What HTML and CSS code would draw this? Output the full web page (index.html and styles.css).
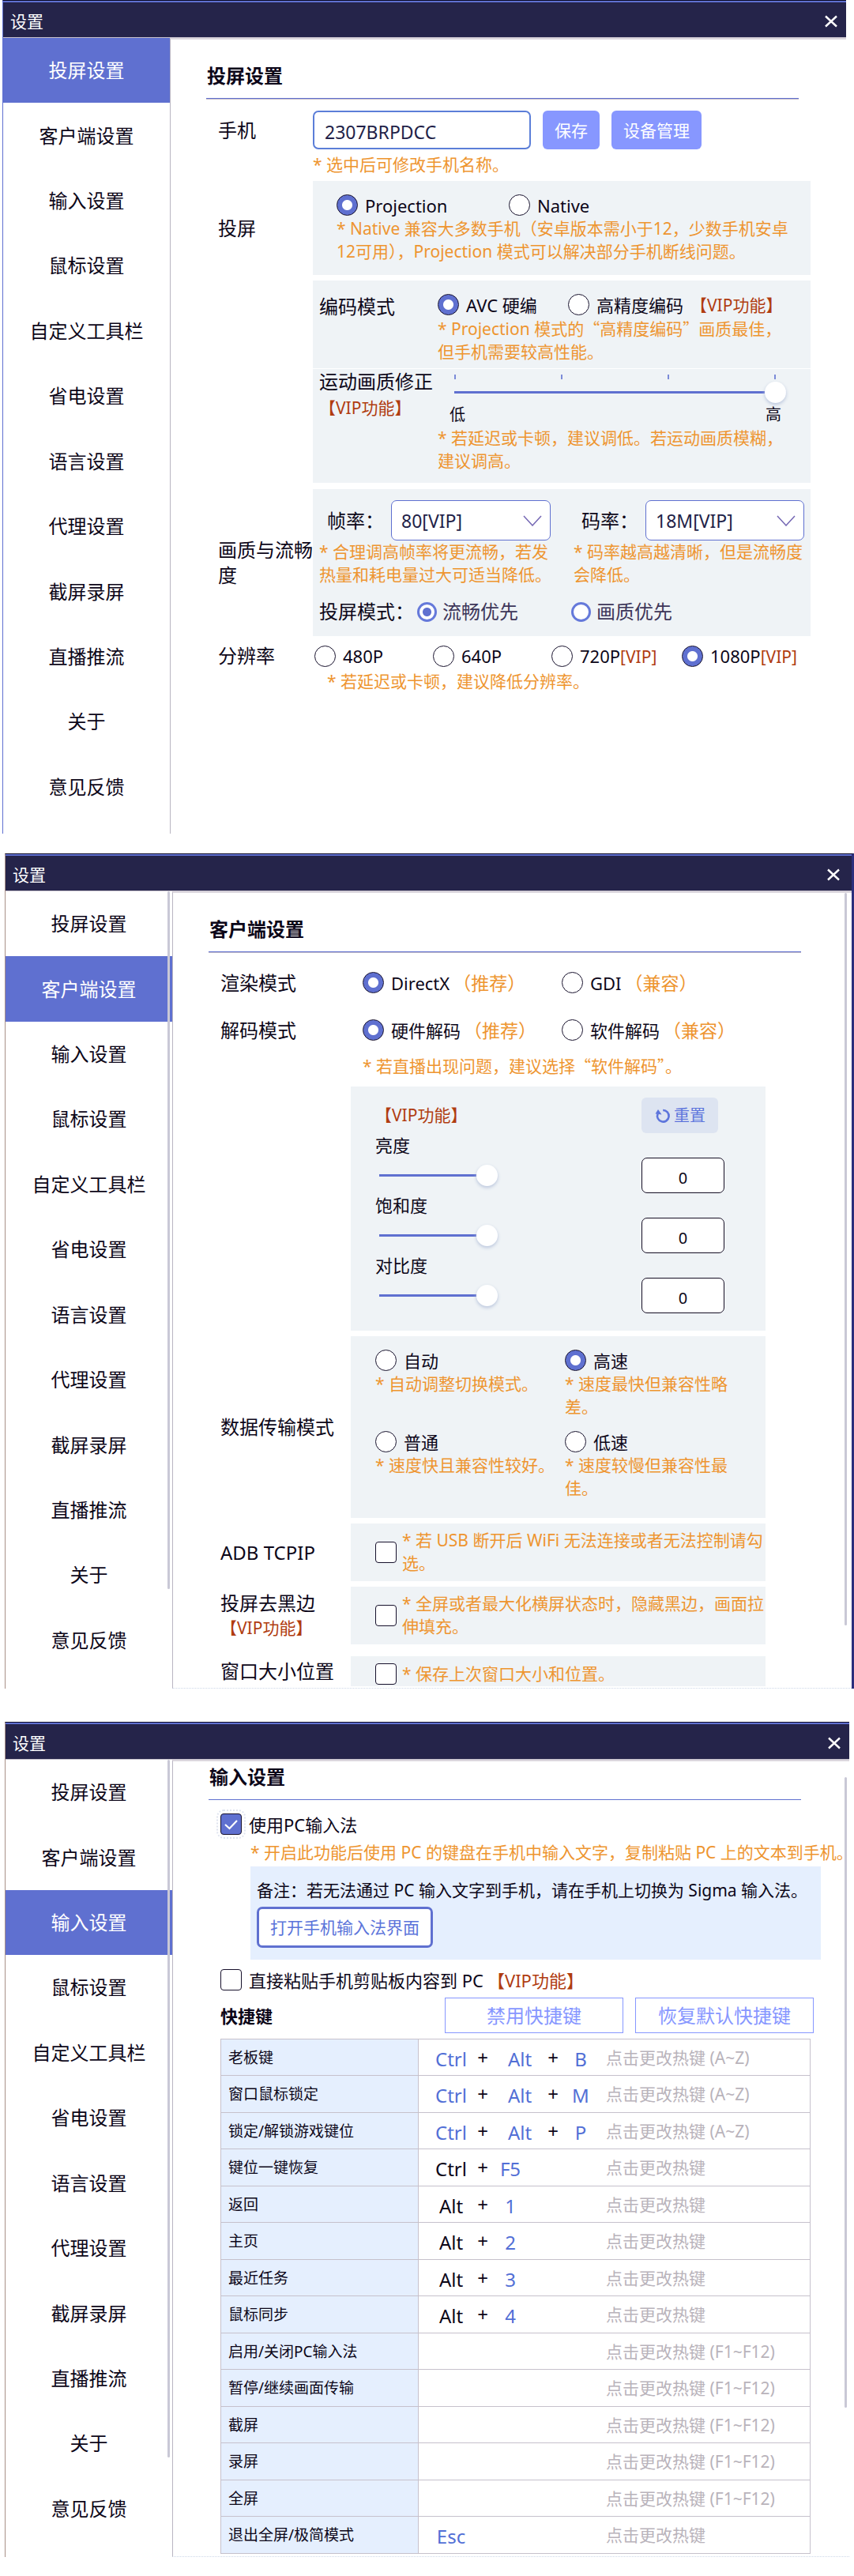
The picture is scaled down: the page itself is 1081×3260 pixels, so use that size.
FILE: index.html
```html
<!DOCTYPE html>
<html lang="zh-CN">
<head>
<meta charset="utf-8">
<title>设置</title>
<link rel="stylesheet" href="styles.css">
</head>
<body>

<section class="window window--mirror">
  <header class="titlebar">
    <span>设置</span>
    <button class="close" aria-label="关闭"><svg viewBox="0 0 16 16" width="16" height="16"><path d="M1 1.500L15 14.500M15 1.500L1 14.500"/></svg></button>
  </header>
  <div class="body">
    <nav class="nav">
      <a class="active" href="#mirror">投屏设置</a><a href="#client">客户端设置</a><a href="#input">输入设置</a><a href="#mouse">鼠标设置</a><a href="#toolbar">自定义工具栏</a><a href="#power">省电设置</a><a href="#lang">语言设置</a><a href="#proxy">代理设置</a><a href="#record">截屏录屏</a><a href="#live">直播推流</a><a href="#about">关于</a><a href="#feedback">意见反馈</a>
    </nav>
    <main class="main" id="mirror">
      <h2>投屏设置</h2>

      <div class="row row--phone">
        <label for="phone">手机</label>
        <div class="controls">
          <input class="text-input" id="phone" type="text" value="2307BRPDCC">
          <button class="btn">保存</button>
          <button class="btn">设备管理</button>
        </div>
        <p class="hint">* 选中后可修改手机名称。</p>
      </div>

      <div class="row row--cast">
        <span>投屏</span>
        <div class="panel panel--cast">
          <div class="options options--cast">
            <label class="option"><input type="radio" name="cast" checked>Projection</label>
            <label class="option"><input type="radio" name="cast">Native</label>
          </div>
          <p class="hint">* Native 兼容大多数手机（安卓版本需小于12，少数手机安卓12可用），Projection 模式可以解决部分手机断线问题。</p>
        </div>
      </div>

      <div class="row row--codec">
        <div class="panel panel--split panel--codec">
          <span class="side">编码模式</span>
          <div>
            <div class="options options--codec">
              <label class="option"><input type="radio" name="codec" checked>AVC 硬编</label>
              <label class="option"><input type="radio" name="codec">高精度编码<span class="vip">【VIP功能】</span></label>
            </div>
            <p class="hint">* Projection 模式的<span class="quote">“</span>高精度编码<span class="quote">”</span>画质最佳，但手机需要较高性能。</p>
          </div>
        </div>
      </div>
      <div class="row row--motion">
        <div class="panel panel--split panel--motion">
          <label class="side" for="motion">运动画质修正<br><span class="vip">【VIP功能】</span></label>
          <div>
            <div class="ticks"><i></i><i></i><i></i><i></i></div>
            <input class="range range--motion" id="motion" type="range" min="0" max="3" value="3">
            <div class="range-ends"><span>低</span><span>高</span></div>
            <p class="hint">* 若延迟或卡顿，建议调低。若运动画质模糊，建议调高。</p>
          </div>
        </div>
      </div>

      <div class="row row--quality">
        <span>画质与流畅度</span>
        <div class="panel panel--quality">
          <div>
            <div class="pick">
              <label for="fps">帧率：</label>
              <div class="select"><select id="fps"><option>80[VIP]</option></select><svg viewBox="0 0 24 14" width="24" height="14"><path d="M1 1L12 13L23 1"/></svg></div>
            </div>
            <p class="hint hint--fps">* 合理调高帧率将更流畅，若发热量和耗电量过大可适当降低。</p>
          </div>
          <div>
            <div class="pick">
              <label for="rate">码率：</label>
              <div class="select"><select id="rate"><option>18M[VIP]</option></select><svg viewBox="0 0 24 14" width="24" height="14"><path d="M1 1L12 13L23 1"/></svg></div>
            </div>
            <p class="hint">* 码率越高越清晰，但是流畅度会降低。</p>
          </div>
          <div class="priority">
            <span>投屏模式：</span>
            <label class="option option--ring"><input type="radio" name="priority" checked>流畅优先</label>
            <label class="option option--ring"><input type="radio" name="priority">画质优先</label>
          </div>
        </div>
      </div>

      <div class="row row--resolution">
        <span>分辨率</span>
        <div class="options options--resolution">
          <label class="option"><input type="radio" name="res">480P</label>
          <label class="option"><input type="radio" name="res">640P</label>
          <label class="option"><input type="radio" name="res"><span>720P<span class="tag">[VIP]</span></span></label>
          <label class="option"><input type="radio" name="res" checked><span>1080P<span class="tag">[VIP]</span></span></label>
        </div>
        <p class="hint">* 若延迟或卡顿，建议降低分辨率。</p>
      </div>
    </main>
  </div>
</section>

<section class="window window--client">
  <header class="titlebar">
    <span>设置</span>
    <button class="close" aria-label="关闭"><svg viewBox="0 0 16 16" width="16" height="16"><path d="M1 1.500L15 14.500M15 1.500L1 14.500"/></svg></button>
  </header>
  <div class="body">
    <nav class="nav">
      <a href="#mirror">投屏设置</a><a class="active" href="#client">客户端设置</a><a href="#input">输入设置</a><a href="#mouse">鼠标设置</a><a href="#toolbar">自定义工具栏</a><a href="#power">省电设置</a><a href="#lang">语言设置</a><a href="#proxy">代理设置</a><a href="#record">截屏录屏</a><a href="#live">直播推流</a><a href="#about">关于</a><a href="#feedback">意见反馈</a>
      <i class="scrollbar"></i>
    </nav>
    <main class="main" id="client">
      <h2>客户端设置</h2>

      <div class="row row--render">
        <span>渲染模式</span>
        <div class="options options--client">
          <label class="option"><input type="radio" name="render" checked><span>DirectX<span class="note">（推荐）</span></span></label>
          <label class="option"><input type="radio" name="render"><span>GDI<span class="note">（兼容）</span></span></label>
        </div>
      </div>
      <div class="row row--decode">
        <span>解码模式</span>
        <div class="options options--client">
          <label class="option"><input type="radio" name="decode" checked><span>硬件解码<span class="note">（推荐）</span></span></label>
          <label class="option"><input type="radio" name="decode"><span>软件解码<span class="note">（兼容）</span></span></label>
        </div>
        <p class="hint">* 若直播出现问题，建议选择<span class="quote">“</span>软件解码<span class="quote">”</span>。</p>
      </div>

      <div class="row row--inset row--picture">
        <div class="panel panel--picture">
          <span class="vip">【VIP功能】</span>
          <button class="reset"><svg viewBox="0 0 20 20" width="20" height="20"><path class="arc" d="M10.200 3A7.300 7.300 0 1 1 3.600 7.500"/><path class="tip" d="M4 2L8.600 8.600L0.600 7.600Z"/></svg>重置</button>
          <label for="bright">亮度</label>
          <input class="range range--picture" id="bright" type="range" min="-100" max="100" value="0">
          <input class="number" type="text" value="0" aria-label="亮度值">
          <label for="satur">饱和度</label>
          <input class="range range--picture" id="satur" type="range" min="-100" max="100" value="0">
          <input class="number" type="text" value="0" aria-label="饱和度值">
          <label for="contrast">对比度</label>
          <input class="range range--picture" id="contrast" type="range" min="-100" max="100" value="0">
          <input class="number" type="text" value="0" aria-label="对比度值">
        </div>
      </div>

      <div class="row row--inset row--transfer">
        <span>数据传输模式</span>
        <div class="panel panel--transfer">
          <div>
            <label class="option"><input type="radio" name="transfer">自动</label>
            <p class="hint">* 自动调整切换模式。</p>
          </div>
          <div>
            <label class="option"><input type="radio" name="transfer" checked>高速</label>
            <p class="hint">* 速度最快但兼容性略差。</p>
          </div>
          <div>
            <label class="option"><input type="radio" name="transfer">普通</label>
            <p class="hint">* 速度快且兼容性较好。</p>
          </div>
          <div>
            <label class="option"><input type="radio" name="transfer">低速</label>
            <p class="hint">* 速度较慢但兼容性最佳。</p>
          </div>
        </div>
      </div>

      <div class="row row--inset row--check">
        <label for="adb">ADB TCPIP</label>
        <div class="panel panel--check"><input type="checkbox" id="adb"><p class="hint">* 若 USB 断开后 WiFi 无法连接或者无法控制请勾选。</p></div>
      </div>
      <div class="row row--inset row--check">
        <label for="black">投屏去黑边<br><span class="vip">【VIP功能】</span></label>
        <div class="panel panel--check"><input type="checkbox" id="black"><p class="hint">* 全屏或者最大化横屏状态时，隐藏黑边，画面拉伸填充。</p></div>
      </div>
      <div class="row row--inset row--place">
        <label for="place">窗口大小位置</label>
        <div class="panel panel--check"><input type="checkbox" id="place"><p class="hint">* 保存上次窗口大小和位置。</p></div>
      </div>
      <i class="scrollbar"></i>
    </main>
  </div>
</section>

<section class="window window--input">
  <header class="titlebar">
    <span>设置</span>
    <button class="close" aria-label="关闭"><svg viewBox="0 0 16 16" width="16" height="16"><path d="M1 1.500L15 14.500M15 1.500L1 14.500"/></svg></button>
  </header>
  <div class="body">
    <nav class="nav">
      <a href="#mirror">投屏设置</a><a href="#client">客户端设置</a><a class="active" href="#input">输入设置</a><a href="#mouse">鼠标设置</a><a href="#toolbar">自定义工具栏</a><a href="#power">省电设置</a><a href="#lang">语言设置</a><a href="#proxy">代理设置</a><a href="#record">截屏录屏</a><a href="#live">直播推流</a><a href="#about">关于</a><a href="#feedback">意见反馈</a>
      <i class="scrollbar"></i>
    </nav>
    <main class="main" id="input">
      <h2>输入设置</h2>
      <label class="option option--ime"><input class="focused" type="checkbox" checked>使用PC输入法</label>
      <p class="hint hint--ime">* 开启此功能后使用 PC 的键盘在手机中输入文字，复制粘贴 PC 上的文本到手机。</p>
      <div class="remark">
        <p>备注：若无法通过 PC 输入文字到手机，请在手机上切换为 Sigma 输入法。</p>
        <button class="btn-outline">打开手机输入法界面</button>
      </div>
      <label class="option option--paste"><input type="checkbox"><span>直接粘贴手机剪贴板内容到 PC<span class="vip">【VIP功能】</span></span></label>
      <div class="hotkey-bar">
        <h3>快捷键</h3>
        <button class="btn-flat">禁用快捷键</button>
        <button class="btn-flat">恢复默认快捷键</button>
      </div>
      <table class="hotkeys">
        <tbody>
          <tr><th scope="row">老板键</th><td><div class="keys"><kbd class="blue">Ctrl</kbd><b>+</b><kbd class="blue">Alt</kbd><b>+</b><kbd class="blue">B</kbd><button>点击更改热键 (A~Z)</button></div></td></tr>
          <tr><th scope="row">窗口鼠标锁定</th><td><div class="keys"><kbd class="blue">Ctrl</kbd><b>+</b><kbd class="blue">Alt</kbd><b>+</b><kbd class="blue">M</kbd><button>点击更改热键 (A~Z)</button></div></td></tr>
          <tr><th scope="row">锁定/解锁游戏键位</th><td><div class="keys"><kbd class="blue">Ctrl</kbd><b>+</b><kbd class="blue">Alt</kbd><b>+</b><kbd class="blue">P</kbd><button>点击更改热键 (A~Z)</button></div></td></tr>
          <tr><th scope="row">键位一键恢复</th><td><div class="keys"><kbd>Ctrl</kbd><b>+</b><kbd class="blue short">F5</kbd><button>点击更改热键</button></div></td></tr>
          <tr><th scope="row">返回</th><td><div class="keys"><kbd>Alt</kbd><b>+</b><kbd class="blue short">1</kbd><button>点击更改热键</button></div></td></tr>
          <tr><th scope="row">主页</th><td><div class="keys"><kbd>Alt</kbd><b>+</b><kbd class="blue short">2</kbd><button>点击更改热键</button></div></td></tr>
          <tr><th scope="row">最近任务</th><td><div class="keys"><kbd>Alt</kbd><b>+</b><kbd class="blue short">3</kbd><button>点击更改热键</button></div></td></tr>
          <tr><th scope="row">鼠标同步</th><td><div class="keys"><kbd>Alt</kbd><b>+</b><kbd class="blue short">4</kbd><button>点击更改热键</button></div></td></tr>
          <tr><th scope="row">启用/关闭PC输入法</th><td><div class="keys"><button>点击更改热键 (F1~F12)</button></div></td></tr>
          <tr><th scope="row">暂停/继续画面传输</th><td><div class="keys"><button>点击更改热键 (F1~F12)</button></div></td></tr>
          <tr><th scope="row">截屏</th><td><div class="keys"><button>点击更改热键 (F1~F12)</button></div></td></tr>
          <tr><th scope="row">录屏</th><td><div class="keys"><button>点击更改热键 (F1~F12)</button></div></td></tr>
          <tr><th scope="row">全屏</th><td><div class="keys"><button>点击更改热键 (F1~F12)</button></div></td></tr>
          <tr><th scope="row">退出全屏/极简模式</th><td><div class="keys"><kbd class="blue">Esc</kbd><button>点击更改热键</button></div></td></tr>
        </tbody>
      </table>
      <i class="scrollbar"></i>
    </main>
  </div>
</section>

</body>
</html>
```

FILE: styles.css
```css
:root {
  --accent: #5f70d0;
  --soft-accent: #8797ff;
  --navy: #25244a;
  --ink: #0c0618;
  --ink-soft: #221f48;
  --hint: #ee9530;
  --vip: #b03c10;
  --panel: #eff3f6;
  --line: #c6c1cc;
}

* { box-sizing: border-box; margin: 0; padding: 0; }

body {
  background: #fff;
  color: var(--ink);
  font: 24px/32px "Noto Sans", "Noto Sans CJK SC", sans-serif;
}

button, input, select, kbd { font: inherit; color: inherit; }
button { cursor: pointer; }

/* window frame */
.window { border-top: 1px solid #0a0824; border-left: 1px solid var(--accent); }
.window--mirror { margin: 0 10px 25px 3px; }
.window--client { margin: 0 0 42px 6px; border-left-color: #a99088; border-right: 3px solid #2b2f7c; }
.window--input { margin: 0 6px 24px 6px; border-left-color: #a99088; }

.titlebar {
  display: flex;
  align-items: center;
  justify-content: space-between;
  height: 46px;
  padding: 4px 10px 0 9px;
  border-top: 2px solid var(--accent);
  background: var(--navy);
  color: #fff;
  font-size: 21px;
}
.window--client .titlebar { padding-right: 14px; }
.close { display: flex; padding: 1px; border: 0; background: none; }
.close svg { fill: none; stroke: #fff; stroke-width: 2.400; }

.body {
  display: grid;
  grid-template-columns: 211px 1fr;
  min-height: 1008px;
  border-top: 1px solid var(--line);
}
.window--client .body, .window--input .body { min-height: 1010px; }

.nav { position: relative; display: grid; grid-auto-rows: 1fr; padding-bottom: 18px; }
.window--client .nav, .window--input .nav { padding-bottom: 20px; }
.nav a {
  display: flex;
  align-items: center;
  justify-content: center;
  color: inherit;
  text-decoration: none;
}
.nav .active { background: var(--accent); color: #fff; }

.main {
  position: relative;
  min-width: 0;
  border-top: 2px solid #dcd7de;
  border-left: 1px solid #b9b5c2;
}
.window--mirror .main { padding: 0 45px 0 45px; }
.window--client .main { padding: 0 64px 0 45px; border-bottom: 1px dotted #cdd8e8; }
.window--input .main { padding: 0 36px 0 45px; border-bottom: 1px dotted #cdd8e8; }

.scrollbar { position: absolute; width: 3px; border-radius: 2px; background: #c9c8d6; }
.nav .scrollbar { top: 0; right: 3px; bottom: 126px; }
.window--client .main .scrollbar { top: 0; right: 6px; bottom: 79px; }
.window--input .main .scrollbar { top: 20px; right: 3px; bottom: 188px; }

h2 {
  padding: 28px 0 10px 1px;
  border-bottom: 1px solid var(--accent);
  box-shadow: 0 1px #c4bcc8;
  font-size: 24px;
  line-height: 36px;
  font-weight: 600;
}
.window--mirror h2 { margin-right: 15px; }
.window--input h2 { margin-right: 25px; padding-top: 2px; box-shadow: none; }

/* rows */
.row {
  display: grid;
  grid-template-columns: 120px 1fr;
  align-items: center;
  padding-left: 15px;
}
.row > .hint, .row > .panel, .row > .options { grid-column: 2; }
.window--client .row { grid-template-columns: 165px 1fr; }
.row--inset { padding-right: 45px; }

.row--phone { margin-top: 15px; }
.row--phone .hint { margin-top: 5px; }
.row--cast { margin-top: 6px; }
.row--codec { margin-top: 7px; }
.row--motion { margin-top: 1px; }
.row--quality { margin-top: 8px; }
.row--resolution { margin-top: 9px; }
.row--resolution .hint { margin-top: 11px; padding-left: 18px; }

.hint { color: var(--hint); font-size: 21px; line-height: 29px; }
.vip, .tag { color: var(--vip); font-size: 21px; }
.note { margin-left: 4px; color: var(--hint); font-size: 23px; }
.quote { font-family: "Noto Sans CJK SC", sans-serif; font-size: 20px; }

.controls { display: flex; gap: 15px; }
.text-input {
  width: 276px;
  height: 49px;
  padding: 4px 13px 0;
  border: 2px solid #5b7ed8;
  border-radius: 7px;
  background: #fff;
  color: var(--ink-soft);
  font-size: 23px;
}
.btn {
  height: 49px;
  padding: 0 15px;
  border: 0;
  border-radius: 6px;
  background: var(--soft-accent);
  color: #fff;
  font-size: 21px;
}

.panel { background: var(--panel); }
.panel--cast { padding: 17px 20px 15px 30px; }
.panel--split { display: grid; grid-template-columns: 150px 1fr; padding: 0 31px 0 8px; }
.panel--codec { padding-top: 17px; padding-bottom: 6px; }
.panel--motion { padding-bottom: 13px; }

/* radio buttons and tick boxes */
.options { display: grid; }
.options--cast { grid-template-columns: 218px 1fr; }
.options--codec { grid-template-columns: 165px 1fr; }
.options--resolution { grid-template-columns: 150px 150px 165px 1fr; padding-left: 2px; }
.options--client { grid-template-columns: 252px 1fr; padding-left: 15px; }

.option {
  display: flex;
  align-items: center;
  gap: 9px;
  height: 27px;
  font-size: 22px;
  white-space: nowrap;
}
.options + .hint, .panel--transfer .hint { margin-top: 2px; }

input[type="radio"], input[type="checkbox"] {
  flex: none;
  width: 27px;
  height: 27px;
  border: 1px solid #17112c;
  background: #fff;
  appearance: none;
}
input[type="radio"] { border-radius: 50%; }
input[type="radio"]:checked { background: radial-gradient(circle, #fff 6px, var(--accent) 7px); }
input[type="checkbox"] { border-radius: 4px; }
input[type="checkbox"]:checked {
  background: var(--accent) url("data:image/svg+xml,%3Csvg xmlns='http://www.w3.org/2000/svg' viewBox='0 0 25 25'%3E%3Cpath d='M5 13L10.500 18L20 8' fill='none' stroke='white' stroke-width='2.200'/%3E%3C/svg%3E");
}
input.focused { outline: 2px dotted #dfe4ef; outline-offset: 3px; }

.option--ring { gap: 7px; font-size: 24px; color: #3d3659; }
.option--ring input[type="radio"] { width: 25px; height: 25px; border: 3px solid #6579da; }
.option--ring input[type="radio"]:checked { background: radial-gradient(circle, var(--accent) 5px, #fff 6px); }

/* sliders */
.range { height: 27px; background: none; appearance: none; }
.range::-webkit-slider-runnable-track { height: 3px; background: var(--accent); }
.range::-webkit-slider-thumb {
  width: 27px;
  height: 27px;
  margin-top: -12px;
  border-radius: 50%;
  background: #fff;
  box-shadow: 0 2px 4px #b9c5dc;
  appearance: none;
}
.range--motion { display: block; width: calc(100% - 21px); margin: 3px 0 0 21px; }
.range--picture { width: 272px; margin-left: 5px; }
.range--picture::-webkit-slider-runnable-track {
  background: linear-gradient(to right, var(--accent) 50%, transparent 50%);
}
.ticks { display: flex; justify-content: space-between; margin: 7px 13px 0 21px; }
.ticks i { width: 2px; height: 6px; background: #7c8bd8; }
.range-ends { display: flex; justify-content: space-between; padding: 0 6px 0 15px; font-size: 20px; line-height: 30px; }

/* picture quality */
.panel--quality { display: grid; grid-template-columns: 322px 1fr; padding: 14px 8px 17px; }
.pick { display: grid; grid-template-columns: 81px 1fr; align-items: center; padding: 0 0 0 10px; }
.pick label { white-space: nowrap; }
.select { position: relative; max-width: 202px; }
.select select {
  display: block;
  width: 100%;
  height: 51px;
  padding: 0 12px;
  border: 1px solid var(--accent);
  border-radius: 7px;
  background: #fff;
  color: var(--ink-soft);
  font-size: 23px;
  appearance: none;
}
.select svg { position: absolute; right: 11px; top: 19px; fill: none; stroke: #7568b4; stroke-width: 1.500; pointer-events: none; }
.hint--fps { padding-right: 22px; }
.priority {
  grid-column: 1 / -1;
  display: grid;
  grid-template-columns: 124px 195px 1fr;
  align-items: center;
  height: 30px;
  margin-top: 16px;
  white-space: nowrap;
}

/* client window */
.row--render { margin-top: 25px; }
.row--decode { margin-top: 33px; }
.row--render > span, .row--decode > span { line-height: 27px; }
.row--decode .hint { margin-top: 17px; padding-left: 15px; }
.row--picture { margin-top: 11px; }
.row--transfer, .row--check { margin-top: 7px; }
.row--place { margin-top: 15px; }
.row--check > label, .row--transfer > span { line-height: 30px; }

.panel--picture {
  display: grid;
  grid-template-columns: 337px 1fr;
  align-items: center;
  row-gap: 1px;
  padding: 14px 0 22px 31px;
  font-size: 22px;
  line-height: 29px;
}
.panel--picture label { grid-column: 1 / -1; }
.reset {
  display: flex;
  align-items: center;
  gap: 4px;
  justify-self: start;
  height: 45px;
  padding: 0 16px 0 17px;
  border: 0;
  border-radius: 6px;
  background: #dde4f1;
  color: #5d75dc;
  font-size: 20px;
}
.reset .arc { fill: none; stroke: #5d75dc; stroke-width: 2.600; }
.reset .tip { fill: #5d75dc; }
.number {
  width: 105px;
  height: 45px;
  padding-top: 5px;
  border: 1px solid #150e24;
  border-radius: 7px;
  background: #fff;
  font-size: 20px;
  text-align: center;
}
.panel--transfer { display: grid; grid-template-columns: 240px 1fr; row-gap: 16px; padding: 17px 31px 23px; }
.panel--check { display: flex; align-items: center; gap: 7px; padding: 7px 0 8px 31px; }
.row--place .panel--check { padding: 8px 0 1px 31px; }

/* input window */
.option--ime { margin: 17px 0 0 15px; }
.option--paste { margin: 12px 0 0 15px; }
.option--paste .vip { margin-left: 5px; font-size: 22px; }
.hint--ime { margin: 8px 0 0 53px; white-space: nowrap; }
.remark {
  margin: 3px 0 0 53px;
  padding: 16px 0 15px 8px;
  background: #e5effe;
  font-size: 21px;
  line-height: 29px;
  white-space: nowrap;
}
.btn-outline {
  display: block;
  height: 52px;
  margin-top: 6px;
  padding: 0 14px;
  border: 3px solid var(--accent);
  border-radius: 7px;
  background: #fff;
  color: #5b74da;
  font-size: 21px;
}
.hotkey-bar { display: flex; gap: 15px; margin: 9px 9px 0 15px; align-items: center; }
.hotkey-bar h3 { margin-right: auto; font-size: 22px; font-weight: 600; }
.btn-flat {
  width: 226px;
  height: 45px;
  border: 1px solid var(--soft-accent);
  background: #fff;
  color: var(--soft-accent);
}
.hotkeys { width: calc(100% - 28px); margin: 7px 13px 2px 15px; border-collapse: collapse; }
.hotkeys tr { height: 46px; }
.hotkeys tr:nth-child(even) { height: 47px; }
.hotkeys th, .hotkeys td { border: 1px solid var(--line); }
.hotkeys th {
  width: 250px;
  padding-left: 9px;
  background: #e5effe;
  font-size: 19px;
  line-height: 24px;
  font-weight: 400;
  text-align: left;
}
.keys {
  display: grid;
  grid-template-columns: 40px 40px 54px 30px 40px 1fr;
  align-items: center;
  padding-left: 21px;
  line-height: 30px;
}
.keys kbd { padding-top: 4px; text-align: center; }
.keys b { font-weight: 400; text-align: center; }
.keys .blue { color: #526fd6; }
.keys .short { margin-right: 24px; }
.keys button {
  grid-column: 6;
  padding-left: 12px;
  border: 0;
  background: none;
  color: #b9b3bb;
  font-size: 21px;
  text-align: left;
  white-space: nowrap;
}
```
